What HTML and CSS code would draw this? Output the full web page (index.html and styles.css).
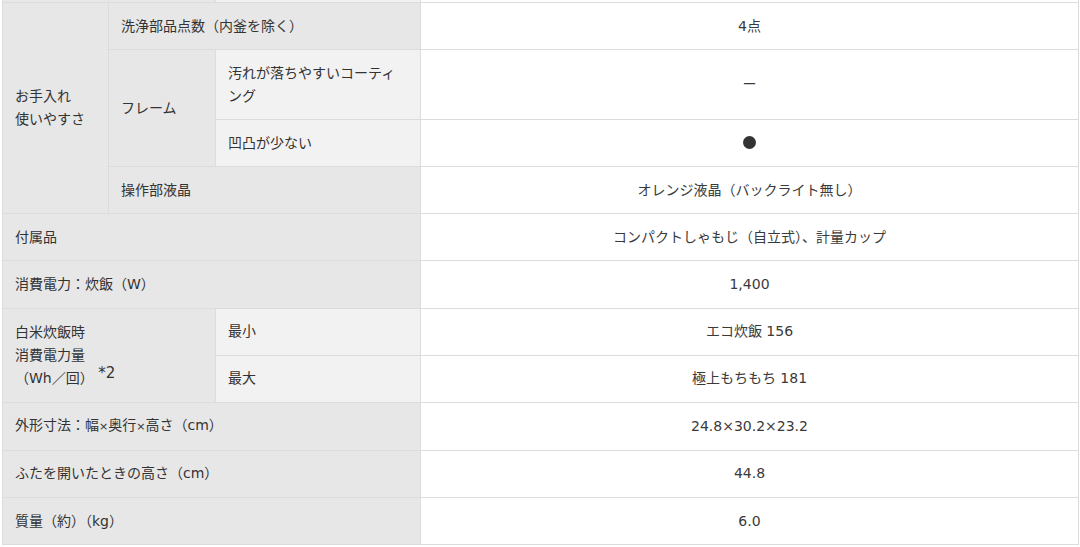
FILE: index.html
```html
<!DOCTYPE html>
<html lang="ja">
<head>
<meta charset="utf-8">
<title>仕様</title>
<link rel="stylesheet" href="styles.css">
</head>
<body>
<div class="wrap">
<table class="spec">
  <colgroup>
    <col class="c1"><col class="c2"><col class="c3"><col class="c4">
  </colgroup>
  <tr class="stub">
    <th colspan="2" class="h"></th>
    <th class="h2"></th>
    <td></td>
  </tr>
  <tr>
    <th rowspan="4" class="h">お手入れ<br>使いやすさ</th>
    <th colspan="2" class="h">洗浄部品点数（内釜を除く）</th>
    <td>4点</td>
  </tr>
  <tr>
    <th rowspan="2" class="h">フレーム</th>
    <th class="h2">汚れが落ちやすいコーティング</th>
    <td>ー</td>
  </tr>
  <tr>
    <th class="h2">凹凸が少ない</th>
    <td><span class="dot">●</span></td>
  </tr>
  <tr>
    <th colspan="2" class="h">操作部液晶</th>
    <td>オレンジ液晶（バックライト無し）</td>
  </tr>
  <tr>
    <th colspan="3" class="h">付属品</th>
    <td>コンパクトしゃもじ（自立式）、計量カップ</td>
  </tr>
  <tr>
    <th colspan="3" class="h">消費電力：炊飯（W）</th>
    <td>1,400</td>
  </tr>
  <tr>
    <th rowspan="2" colspan="2" class="h">白米炊飯時<br>消費電力量<br>（Wh／回） <sup>*2</sup></th>
    <th class="h2">最小</th>
    <td>エコ炊飯 156</td>
  </tr>
  <tr>
    <th class="h2">最大</th>
    <td>極上もちもち 181</td>
  </tr>
  <tr>
    <th colspan="3" class="h">外形寸法：幅<span class="x">×</span>奥行<span class="x">×</span>高さ（cm）</th>
    <td>24.8×30.2×23.2</td>
  </tr>
  <tr>
    <th colspan="3" class="h">ふたを開いたときの高さ（cm）</th>
    <td>44.8</td>
  </tr>
  <tr>
    <th colspan="3" class="h">質量（約）（kg）</th>
    <td>6.0</td>
  </tr>
</table>
</div>
</body>
</html>
```
FILE: styles.css
```css
html, body {
  margin: 0;
  padding: 0;
  background: #fff;
}
body {
  font-family: "DejaVu Sans", "Noto Sans CJK JP", sans-serif;
  color: #333;
  font-size: 14px;
}
.wrap {
  padding: 0 2px 0 2px;
}
.spec {
  border-collapse: collapse;
  width: 1076px;
  table-layout: fixed;
}
.c1 { width: 106px; }
.c2 { width: 107px; }
.c3 { width: 205px; }
.c4 { width: 658px; }
.spec th,
.spec td {
  border: 1px solid #dcdcdc;
  padding: 11.6px 12px 11.5px 12px;
  line-height: 23px;
  font-weight: normal;
  vertical-align: middle;
}
.spec th {
  text-align: left;
}
.spec td {
  text-align: center;
  background: #fff;
  color: #3a3a3a;
}
.spec .h { background: #e7e7e7; }
.spec .h2 { background: #f2f2f2; }
.spec .stub th,
.spec .stub td {
  padding: 0;
  height: 2px;
  line-height: 2px;
  border-top: none;
}
.spec sup {
  font-size: 15px;
  line-height: 0;
  vertical-align: 5px;
}
.x {
  font-size: 11px;
}
.dot {
  display: inline-block;
  width: 13px;
  height: 13px;
  border-radius: 50%;
  background: #333;
  color: transparent;
  font-size: 1px;
  line-height: 13px;
  overflow: hidden;
  vertical-align: -1px;
}
```
